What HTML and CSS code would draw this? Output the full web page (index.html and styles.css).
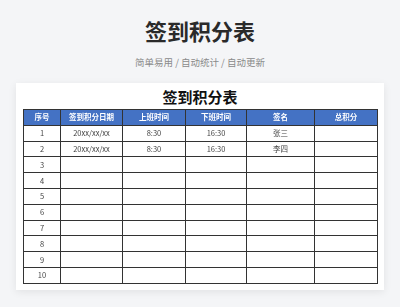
FILE: index.html
```html
<!DOCTYPE html>
<html lang="zh">
<head>
<meta charset="utf-8">
<link rel="stylesheet" href="styles.css">
</head>
<body>
<header class="hero">
  <h1 class="hero-title">签到积分表</h1>
  <p class="hero-sub">简单易用 / 自动统计 / 自动更新</p>
</header>
<main class="card">
  <h2 class="card-title">签到积分表</h2>
  <table class="sheet">
    <colgroup>
      <col class="c1"><col class="c2"><col class="c3"><col class="c4"><col class="c5"><col class="c6">
    </colgroup>
    <thead>
      <tr><th>序号</th><th>签到积分日期</th><th>上班时间</th><th>下班时间</th><th>签名</th><th>总积分</th></tr>
    </thead>
    <tbody>
      <tr><td>1</td><td>20xx/xx/xx</td><td>8:30</td><td>16:30</td><td>张三</td><td></td></tr>
      <tr><td>2</td><td>20xx/xx/xx</td><td>8:30</td><td>16:30</td><td>李四</td><td></td></tr>
      <tr><td>3</td><td></td><td></td><td></td><td></td><td></td></tr>
      <tr><td>4</td><td></td><td></td><td></td><td></td><td></td></tr>
      <tr><td>5</td><td></td><td></td><td></td><td></td><td></td></tr>
      <tr><td>6</td><td></td><td></td><td></td><td></td><td></td></tr>
      <tr><td>7</td><td></td><td></td><td></td><td></td><td></td></tr>
      <tr><td>8</td><td></td><td></td><td></td><td></td><td></td></tr>
      <tr><td>9</td><td></td><td></td><td></td><td></td><td></td></tr>
      <tr><td>10</td><td></td><td></td><td></td><td></td><td></td></tr>
    </tbody>
  </table>
</main>
</body>
</html>
```
FILE: styles.css
```css
html, body {
  margin: 0;
  padding: 0;
}
body {
  background: #f4f5f7;
  font-family: "Noto Sans CJK SC", "Noto Sans", sans-serif;
  color: #333;
  width: 400px;
  height: 307px;
  overflow: hidden;
}
.hero {
  padding-top: 19px;
  text-align: center;
}
.hero-title {
  margin: 0;
  font-size: 22px;
  line-height: 22px;
  font-weight: 700;
  color: #2a2a2a;
}
.hero-sub {
  margin: 14px 0 0;
  font-size: 9.5px;
  line-height: 14px;
  color: #8a8a8a;
}
.card {
  margin: 14px 16px 0;
  background: #fff;
  padding: 5px 7px 6px;
  box-shadow: 0 2px 8px rgba(0, 0, 0, 0.08);
}
.card-title {
  margin: 0 0 4px;
  text-align: center;
  font-size: 15px;
  line-height: 17px;
  font-weight: 700;
  color: #111;
}
.sheet {
  width: 354px;
  border-collapse: collapse;
  table-layout: fixed;
  border: 1.5px solid #222;
  will-change: transform;
}
.c1 { width: 37px; }
.c2 { width: 62px; }
.c3 { width: 63px; }
.c4 { width: 61px; }
.c5 { width: 68px; }
.c6 { width: 63px; }
.sheet th, .sheet td {
  border: 1px solid #333;
  padding: 0;
  height: 14.8px;
  font-size: 7.5px;
  line-height: 14px;
  text-align: center;
}
.sheet th {
  background: #4472c4;
  color: #fff;
  font-weight: 700;
}
.sheet td {
  color: #444;
}
```
